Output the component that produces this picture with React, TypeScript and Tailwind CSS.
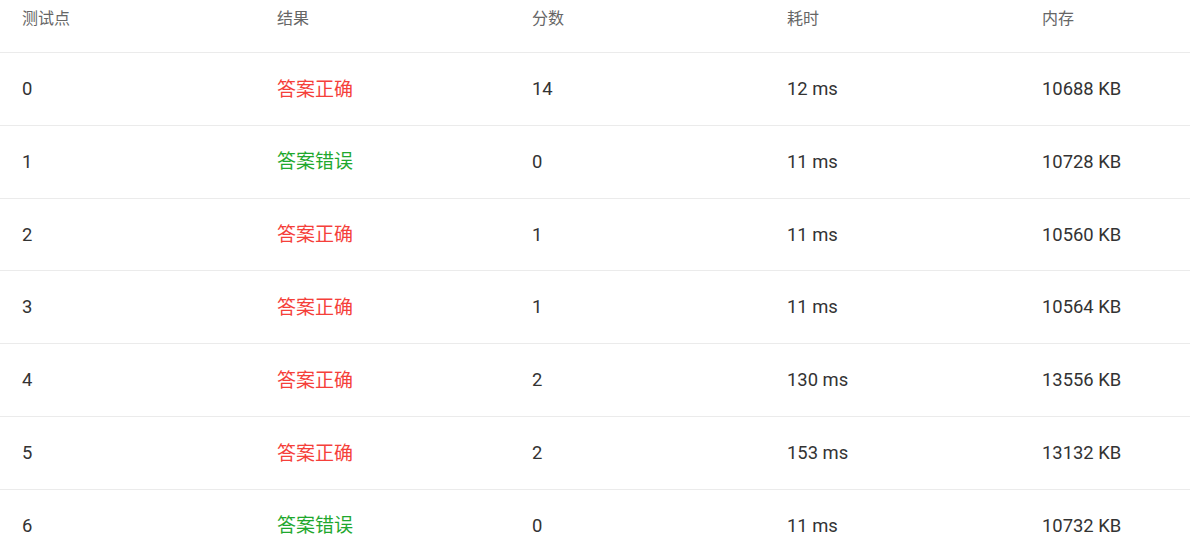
const rows = [
  { id: 0, ok: true, score: 14, time: '12 ms', mem: '10688 KB' },
  { id: 1, ok: false, score: 0, time: '11 ms', mem: '10728 KB' },
  { id: 2, ok: true, score: 1, time: '11 ms', mem: '10560 KB' },
  { id: 3, ok: true, score: 1, time: '11 ms', mem: '10564 KB' },
  { id: 4, ok: true, score: 2, time: '130 ms', mem: '13556 KB' },
  { id: 5, ok: true, score: 2, time: '153 ms', mem: '13132 KB' },
  { id: 6, ok: false, score: 0, time: '11 ms', mem: '10732 KB' },
];

const font = "font-['Roboto','Noto_Sans_CJK_SC',sans-serif]";

export default function App() {
  return (
    <div className={`w-[1190px] h-[554px] overflow-hidden bg-white ${font}`}>
      <div className="w-[1275px]">
        <div className="grid grid-cols-[255px_255px_255px_255px_255px] h-[53px] border-b border-[#ebebeb] pt-[8px] text-[16px] leading-[22px] text-[#666]">
          <div className="pl-[22px]">测试点</div>
          <div className="pl-[22px]">结果</div>
          <div className="pl-[22px]">分数</div>
          <div className="pl-[22px]">耗时</div>
          <div className="pl-[22px]">内存</div>
        </div>
        {rows.map((r) => (
          <div
            key={r.id}
            className="grid grid-cols-[255px_255px_255px_255px_255px] h-[72.8px] items-center border-b border-[#ebebeb] text-[18.4px] text-[#333]"
          >
            <div className="pl-[22px]">{r.id}</div>
            <div className={r.ok ? 'pl-[22px] pt-[2px] text-[19px] text-[#f5403a]' : 'pl-[22px] pt-[2px] text-[19px] text-[#1fa82e]'}>
              {r.ok ? '答案正确' : '答案错误'}
            </div>
            <div className="pl-[22px]">{r.score}</div>
            <div className="pl-[22px]">{r.time}</div>
            <div className="pl-[22px]">{r.mem}</div>
          </div>
        ))}
      </div>
    </div>
  );
}
